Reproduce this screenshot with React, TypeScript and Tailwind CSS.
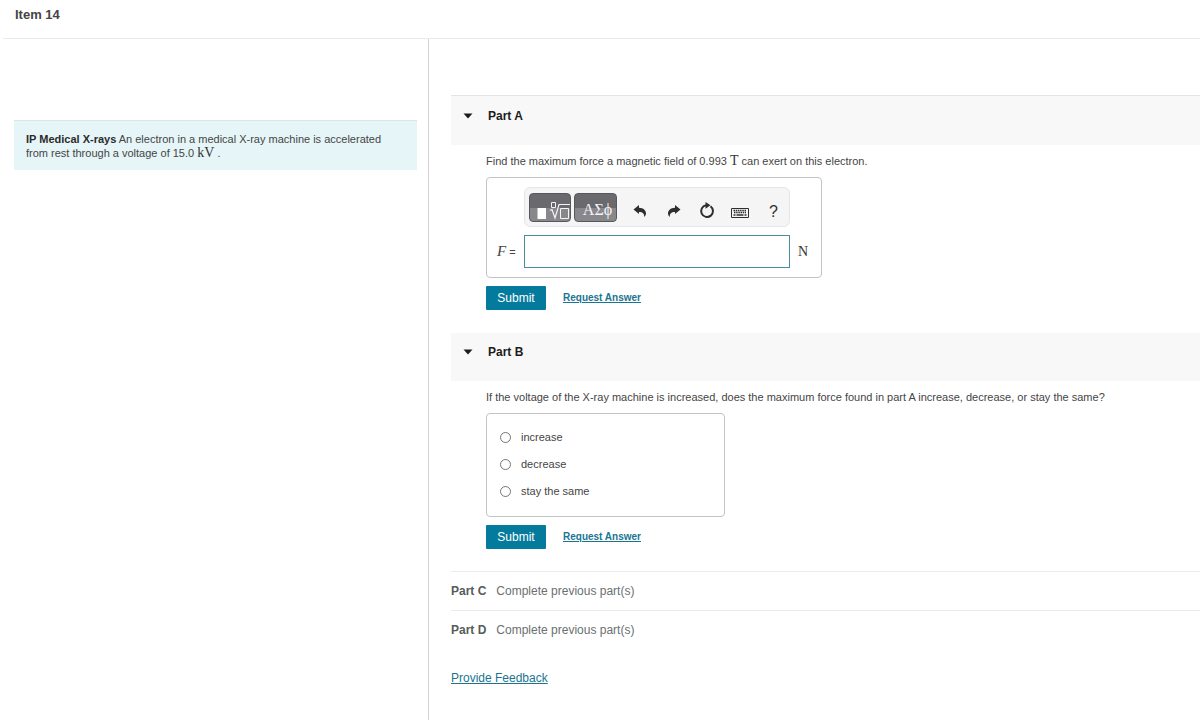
import { useState } from 'react';
import type { ReactNode } from 'react';

const CHOICES = ['increase', 'decrease', 'stay the same'];
const LOCKED_PARTS = ['Part C', 'Part D'];

function Unit({ children }: { children: ReactNode }) {
  return <span className="font-['Liberation_Serif',serif] text-[14px] leading-none text-[#333]">{children}</span>;
}

function PartHeader({ title, className }: { title: string; className: string }) {
  return (
    <h2 className={`bg-[#f8f8f8] pl-3 ${className}`}>
      <button type="button" className="flex items-center gap-[15px] text-[12px] leading-4 font-bold text-[#1c1c1c]">
        <svg width="10" height="6" viewBox="0 0 10 6" aria-hidden="true">
          <path d="M0.5 0.5h9L5 5.5z" fill="#1c1c1c" />
        </svg>
        {title}
      </button>
    </h2>
  );
}

function Actions() {
  return (
    <div className="mt-2 flex items-center gap-[17px]">
      <button
        type="submit"
        className="h-6 w-15 rounded-[1px] bg-[#047a9c] text-[12px] leading-6 font-normal text-white"
      >
        Submit
      </button>
      <a href="#answer" className="text-[10px] leading-4 font-bold text-[#1b7591] underline">
        Request Answer
      </a>
    </div>
  );
}

function MathToolbar() {
  return (
    <div className="flex h-10 items-center rounded-[6px] border border-[#e6e6e6] bg-[#f5f5f5] pl-1 text-[#2e2e2e]">
      <button
        type="button"
        aria-label="Templates"
        className="h-[29px] w-[42px] rounded-[4px] border border-[#58585c] bg-linear-to-b from-[#69696e] from-50% to-[#87878c] to-50%"
      >
        <svg width="40" height="27" viewBox="0 0 40 27" fill="none" stroke="#f4f4f4" aria-hidden="true">
          <path d="M7.500 14h8.500v11h-8.500z" fill="#fff" stroke="none" />
          <path d="M21.500 8.500h4v5h-4z" />
          <path d="M20 16.500l2-1 3 8.500 4-13.500h11" strokeWidth="1.200" />
          <path d="M30.500 14.500h8v10h-8z" />
        </svg>
      </button>
      <button
        type="button"
        aria-label="Symbols"
        className="ml-[3px] h-[29px] w-[43px] rounded-[4px] border border-[#58585c] bg-linear-to-b from-[#69696e] from-50% to-[#87878c] to-50% pt-1 pl-1 font-['Liberation_Serif',serif] text-[16px] leading-6 text-[#f4f4f4]"
      >
        ΑΣϕ
      </button>
      <button type="button" aria-label="Undo" className="ml-4 pt-2">
        <svg width="14" height="14" viewBox="0 0 14 14" fill="currentColor" aria-hidden="true">
          <path d="M0.500 5.500L6 1v2.800c4.500 0.200 7 2.700 7 5.700 0 1.500-0.800 2.800-2 3.500 0.700-3-1.200-5-5-5V10z" />
        </svg>
      </button>
      <button type="button" aria-label="Redo" className="ml-5 pt-2">
        <svg width="14" height="14" viewBox="0 0 14 14" fill="currentColor" aria-hidden="true">
          <path d="M13.500 5.500L8 1v2.800c-4.500 0.200-7 2.700-7 5.700 0 1.500 0.800 2.800 2 3.500-0.700-3 1.200-5 5-5V10z" />
        </svg>
      </button>
      <button type="button" aria-label="Reset" className="ml-[18px] pt-2">
        <svg width="16" height="18" viewBox="0 0 16 18" fill="none" aria-hidden="true">
          <path d="M11.500 4.300A5.900 5.900 0 1 1 7 3.300" stroke="currentColor" strokeWidth="2" />
          <path d="M6.500 0l5 3.200-5 3.600z" fill="currentColor" />
        </svg>
      </button>
      <button type="button" aria-label="Keyboard shortcuts" className="ml-4 pt-3">
        <svg width="18" height="12" viewBox="0 0 18 12" fill="none" stroke="currentColor" aria-hidden="true">
          <path d="M0.500 1.500h17v9h-17z" />
          <path d="M2.500 3.500h13M3 5.500h12" strokeWidth="1.300" strokeDasharray="1.500 0.700" />
          <path d="M2.500 8h2M5.500 8h7M13.500 8h2" strokeWidth="1.500" />
        </svg>
      </button>
      <button type="button" aria-label="Help" className="ml-5 pt-2.5 text-[16px] leading-5">
        ?
      </button>
    </div>
  );
}

export default function App() {
  const [force, setForce] = useState('');
  const [choice, setChoice] = useState('');

  return (
    <div className="flex min-h-screen flex-col bg-white font-['Liberation_Sans',Arial,sans-serif] text-[11px] leading-[14px] text-[#454545]">
      <header className="ml-[3px] border-b border-[#eaeaea] pt-[7px] pb-[15px] pl-3">
        <h1 className="text-[13px] leading-4 font-bold">Item 14</h1>
      </header>

      <main className="grid flex-1 grid-cols-[428px_1fr]">
        <section className="pt-[81px] pr-[11px] pl-3.5">
          <p className="border-t border-[#d7e6e8] bg-[#e6f5f7] px-3 pt-[11px] pb-2.5">
            <strong className="text-[#2b2b2b]">IP Medical X-rays</strong> An electron in a medical X-ray machine is
            accelerated from rest through a voltage of 15.0 <Unit>kV</Unit> .
          </p>
        </section>

        <div className="border-l border-[#d4d4d4] pt-14 pl-[22px]">
          <form onSubmit={(e) => e.preventDefault()}>
            <PartHeader title="Part A" className="border-t border-[#e4e4e4] pt-3 pb-[21px]" />
            <div className="pl-[35px]">
              <label htmlFor="force" className="block pt-[9px] leading-[15px]">
                Find the maximum force a magnetic field of 0.993 <Unit>T</Unit> can exert on this electron.
              </label>
              <div className="mt-2 grid w-fit grid-cols-[27px_266px_21px] items-center gap-x-[5px] gap-y-2 rounded-[4px] border border-[#c4c4c4] px-[5px] pt-[9px] pb-[9px]">
                <div className="col-start-2">
                  <MathToolbar />
                </div>
                <span className="col-start-1 pl-[5px] whitespace-nowrap">
                  <i className="font-['Liberation_Serif',serif] text-[15px]">F</i> =
                </span>
                <input
                  id="force"
                  type="text"
                  value={force}
                  onChange={(e) => setForce(e.target.value)}
                  className="h-[33px] w-full border border-[#4a8da0] bg-white px-2 text-[13px] outline-none"
                />
                <span className="pl-[3px]">
                  <Unit>N</Unit>
                </span>
              </div>
              <Actions />
            </div>
          </form>

          <form className="mt-[23px]" onSubmit={(e) => e.preventDefault()}>
            <PartHeader title="Part B" className="pt-[11px] pb-[21px]" />
            <fieldset className="pl-[35px]">
              <legend className="pt-[9px] leading-[15px]">
                If the voltage of the X-ray machine is increased, does the maximum force found in part A increase,
                decrease, or stay the same?
              </legend>
              <div className="mt-2 flex w-[239px] flex-col gap-[13px] rounded-[4px] border border-[#c4c4c4] px-[13px] pt-4 pb-[18px]">
                {CHOICES.map((label) => (
                  <label key={label} className="flex items-center gap-2.5">
                    <input
                      type="radio"
                      name="change"
                      checked={choice === label}
                      onChange={() => setChoice(label)}
                      className="size-[11px] appearance-none rounded-full border border-[#767676] bg-white checked:border-[3px] checked:border-[#047a9c]"
                    />
                    {label}
                  </label>
                ))}
              </div>
            </fieldset>
            <div className="pl-[35px]">
              <Actions />
            </div>
          </form>

          <ul className="mt-[22px] text-[12px] leading-4 text-[#6a7070]">
            {LOCKED_PARTS.map((part) => (
              <li key={part} className="flex gap-2.5 border-t border-[#ebebeb] py-[11px]">
                <strong className="text-[#565b5b]">{part}</strong>
                <span>Complete previous part(s)</span>
              </li>
            ))}
          </ul>

          <a href="#feedback" className="mt-[21px] inline-block text-[12px] leading-4 text-[#1b7591] underline">
            Provide Feedback
          </a>
        </div>
      </main>
    </div>
  );
}
